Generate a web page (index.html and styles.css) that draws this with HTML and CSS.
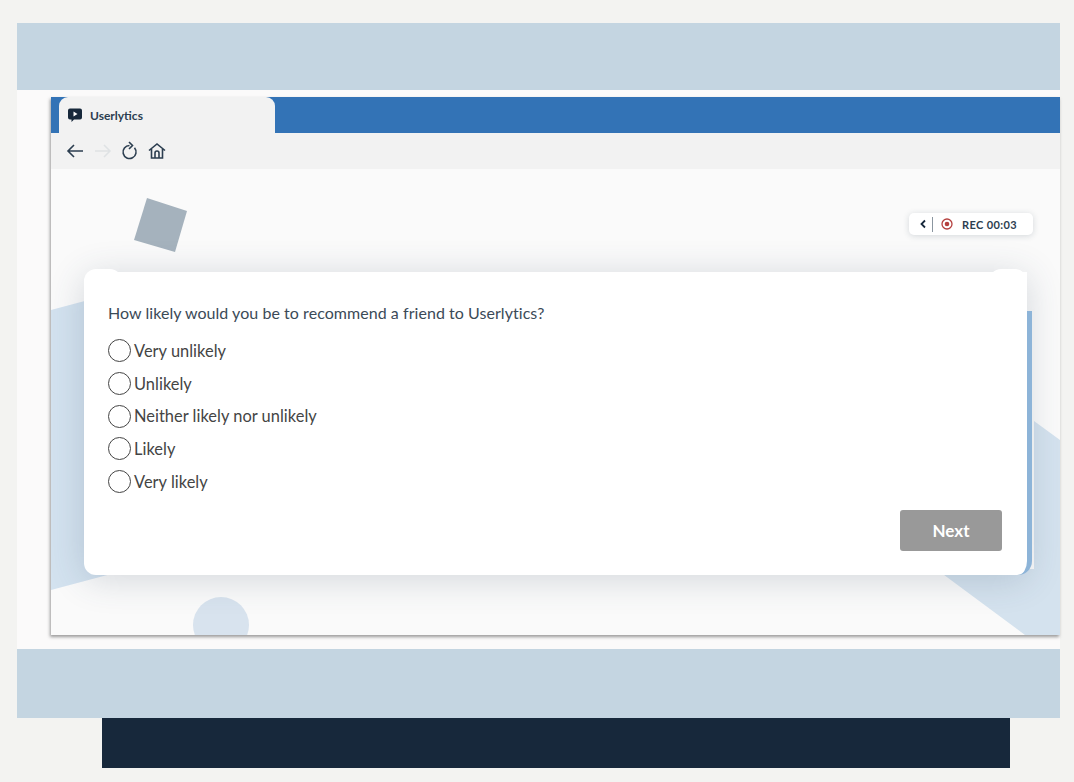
FILE: index.html
```html
<!DOCTYPE html>
<html>
  <head>
    <title>Userlytics</title>
    <link rel="stylesheet" href="styles.css">
  </head>

  <body>
    <div class="frame">
      <div class="band band-top"></div>
      <div class="stage">
        <div class="window">
          <div class="tabbar">
            <div class="tab">
              <svg class="tab-icon" width="16" height="16" viewBox="0 0 16 16">
                <path d="M3 1.500h10a2 2 0 0 1 2 2v7a2 2 0 0 1-2 2H7l-2.500 2.500V12.500H3a2 2 0 0 1-2-2v-7a2 2 0 0 1 2-2z" fill="#17283b"/>
                <path d="M6.500 4.500l4 2.500-4 2.500z" fill="#fff"/>
              </svg>
              <span>Userlytics</span>
            </div>
          </div>
          <div class="toolbar">
            <svg width="18" height="18" viewBox="0 0 18 18">
              <path d="M17 9H2M8 3L2 9l6 6" fill="none" stroke="#2c3e50" stroke-width="1.600"/>
            </svg>
            <svg width="18" height="18" viewBox="0 0 18 18">
              <path d="M1 9h15M10 3l6 6-6 6" fill="none" stroke="#dfe2e4" stroke-width="1.500"/>
            </svg>
            <svg class="nav-reload" width="18" height="20" viewBox="0 0 18 20">
              <path d="M8.500 4.500a6.500 6.500 0 1 0 5 2.300" fill="none" stroke="#2c3e50" stroke-width="1.600"/>
              <path d="M8 1l3.500 3.500L8 8" fill="none" stroke="#2c3e50" stroke-width="1.600"/>
            </svg>
            <svg class="nav-home" width="18" height="18" viewBox="0 0 18 18">
              <path d="M1 8.500L9 2l8 6.500M3.500 7v9h11V7M7 16v-5a2 2 0 0 1 4 0v5" fill="none" stroke="#2c3e50" stroke-width="1.600"/>
            </svg>
          </div>
          <div class="content">
            <svg class="shapes" width="1009" height="466" viewBox="0 0 1009 466">
              <polygon points="96,29 136,42 124,83 83,71" fill="#a5b2bd"/>
              <polygon points="0,141 60,125 60,405 0,421" fill="#d3e2ef"/>
              <circle cx="170" cy="456" r="28" fill="#d8e3ee"/>
              <polygon points="983,252 1009,271 1009,466 974,466 885,400 983,400" fill="#d4e2ee"/>
            </svg>
            <div class="rec">
              <svg width="8" height="10" viewBox="0 0 8 10">
                <path d="M6 1.500L2.500 5 6 8.500" fill="none" stroke="#17283b" stroke-width="1.800"/>
              </svg>
              <span class="rec-line"></span>
              <svg width="12" height="12" viewBox="0 0 12 12">
                <circle cx="6" cy="6" r="5" fill="none" stroke="#b5403f" stroke-width="1.300"/>
                <circle cx="6" cy="6" r="2.300" fill="#b5403f"/>
              </svg>
              <span class="rec-text">REC 00:03</span>
            </div>
            <div class="card">
              <p class="question">How likely would you be to recommend a friend to Userlytics?</p>
              <label class="option"><span class="radio"></span>Very unlikely</label>
              <label class="option"><span class="radio"></span>Unlikely</label>
              <label class="option"><span class="radio"></span>Neither likely nor unlikely</label>
              <label class="option"><span class="radio"></span>Likely</label>
              <label class="option"><span class="radio"></span>Very likely</label>
              <div class="actions">
                <button class="next">Next</button>
              </div>
            </div>
            <div class="strip"></div>
          </div>
        </div>
      </div>
      <div class="band band-bottom"></div>
    </div>
    <div class="darkbar"></div>
  </body>
</html>
```

FILE: styles.css
```css
body {
  margin: 0;
  padding: 23px 14px 14px 17px;
  background: #f3f3f1;
  font-family: "Lato", sans-serif;
}

.frame {
  width: 1043px;
}

.band {
  background: #c4d5e1;
}

.band-top {
  height: 67px;
}

.band-bottom {
  height: 69px;
}

.stage {
  background: #fbfafa;
  padding: 7px 0 14px 34px;
}

.darkbar {
  width: 908px;
  height: 50px;
  margin-left: 85px;
  background: #17283b;
}

.window {
  box-shadow: -1px 2px 3px rgba(60, 60, 60, 0.5);
}

.tabbar {
  height: 36px;
  background: #3373b6;
  padding-left: 8px;
}

.tab {
  width: 216px;
  height: 36px;
  background: #f2f2f2;
  border-radius: 9px 9px 0 0;
  display: flex;
  align-items: center;
  gap: 7px;
  padding-left: 8px;
  box-sizing: border-box;
  font-size: 12px;
  font-weight: 700;
  color: #2c3e50;
}

.toolbar {
  height: 36px;
  background: #f2f2f2;
  display: flex;
  align-items: center;
  padding-left: 15px;
  gap: 10px;
}

.nav-reload,
.nav-home {
  margin-left: -1px;
}

.content {
  position: relative;
  height: 466px;
  overflow: hidden;
  background: #fafafa;
}

.shapes {
  position: absolute;
  left: 0;
  top: 0;
}

.rec {
  position: absolute;
  left: 858px;
  top: 44px;
  width: 124px;
  height: 22px;
  box-sizing: border-box;
  padding-left: 10px;
  display: flex;
  align-items: center;
  background: #fff;
  border-radius: 5px;
  box-shadow: 0 1px 6px rgba(40, 60, 80, 0.18);
  font-size: 11px;
  font-weight: 700;
  color: #2c3e50;
}

.rec-line {
  width: 1px;
  height: 15px;
  background: #8b96a0;
  margin: 0 8px 0 5px;
}

.rec-text {
  margin-left: 9px;
  letter-spacing: 0.4px;
}

/* wraps the card's bottom right corner */
.strip {
  position: absolute;
  left: 965px;
  top: 142px;
  width: 11px;
  height: 264px;
  border-right: 5px solid #8db4d8;
  border-radius: 0 0 14px 0;
}

.card {
  position: absolute;
  left: 33px;
  top: 103px;
  width: 943px;
  height: 303px;
  box-sizing: border-box;
  padding: 31px 25px 0 24px;
  background: #fff;
  border-radius: 12px 0 10px 12px;
  box-shadow: 0 4px 36px rgba(50, 70, 95, 0.2);
  color: #3a4753;
}

.card::before,
.card::after {
  content: "";
  position: absolute;
  top: -3px;
  width: 38px;
  height: 20px;
  background: #fff;
  border-radius: 12px 12px 0 0;
}

.card::before {
  left: 0;
}

.card::after {
  right: 0;
}

.question {
  margin: 0 0 11px;
  font-size: 16px;
  line-height: 20px;
  letter-spacing: 0.05px;
  color: #3b4a57;
}

.option {
  display: flex;
  align-items: center;
  height: 32.700px;
  font-size: 16.400px;
  letter-spacing: 0.03px;
  color: #444;
}

.radio {
  width: 21px;
  height: 21px;
  margin: 1px 3px 0 0;
  border: 1.500px solid #444;
  border-radius: 50%;
  flex: none;
}

.actions {
  display: flex;
  justify-content: flex-end;
  margin-top: 13px;
}

.next {
  width: 102px;
  height: 41px;
  border: none;
  border-radius: 3px;
  background: #999;
  color: #fff;
  font-family: "Lato", sans-serif;
  font-size: 17px;
  font-weight: 700;
}
```
